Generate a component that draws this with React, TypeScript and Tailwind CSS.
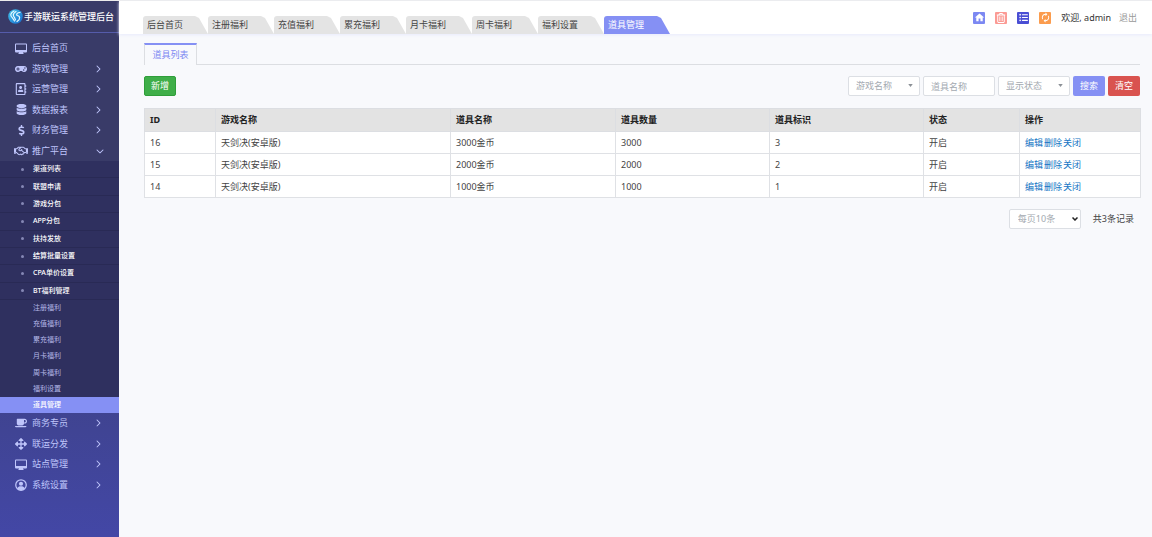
import type { ReactNode } from "react";
import {
  FaArrowsAlt,
  FaCoffee,
  FaDatabase,
  FaDollarSign,
  FaGamepad,
  FaRegAddressBook,
  FaRegHandshake,
} from "react-icons/fa";
import { FaChevronDown, FaChevronRight, FaListUl, FaRegTrashCan } from "react-icons/fa6";
import { MdAutorenew, MdHome } from "react-icons/md";

type MenuEntry = { label: string; icon: ReactNode; open?: boolean; leaf?: boolean };

const MonitorIcon = () => (
  <svg viewBox="0 0 24 22" className="h-[11px] w-3" fill="currentColor">
    <path
      fillRule="evenodd"
      d="M2 1h20a2 2 0 0 1 2 2v14a2 2 0 0 1-2 2h-6v1h1v2H7v-2h1v-1H2a2 2 0 0 1-2-2V3a2 2 0 0 1 2-2zm0 2v11h20V3z"
    />
  </svg>
);

const UserIcon = () => (
  <svg viewBox="0 0 24 24" className="size-3">
    <circle cx="12" cy="12" r="10.5" fill="none" stroke="currentColor" strokeWidth="2.5" />
    <circle cx="12" cy="9.5" r="4.2" fill="currentColor" />
    <path d="M4.500 19c1-3.500 4-4.500 7.500-4.500s6.500 1 7.500 4.500c-4 4.500-11 4.500-15 0z" fill="currentColor" />
  </svg>
);

const topMenu: MenuEntry[] = [
  { label: "后台首页", icon: <MonitorIcon />, leaf: true },
  { label: "游戏管理", icon: <FaGamepad size={12} /> },
  { label: "运营管理", icon: <FaRegAddressBook size={12} /> },
  { label: "数据报表", icon: <FaDatabase size={11} /> },
  { label: "财务管理", icon: <FaDollarSign size={11} /> },
  { label: "推广平台", icon: <FaRegHandshake size={14} />, open: true },
];

const bottomMenu: MenuEntry[] = [
  { label: "商务专员", icon: <FaCoffee size={12} /> },
  { label: "联运分发", icon: <FaArrowsAlt size={12} /> },
  { label: "站点管理", icon: <MonitorIcon /> },
  { label: "系统设置", icon: <UserIcon /> },
];

const subMenu = ["渠道列表", "联盟申请", "游戏分包", "APP分包", "扶持发放", "结算批量设置", "CPA单价设置", "BT福利管理"];
const welfareMenu = ["注册福利", "充值福利", "累充福利", "月卡福利", "周卡福利", "福利设置", "道具管理"];
const tabs = ["后台首页", ...welfareMenu];
const ACTIVE = "道具管理";

const columns = [
  { title: "ID", width: "w-[71px]" },
  { title: "游戏名称", width: "w-[235px]" },
  { title: "道具名称", width: "w-[165px]" },
  { title: "道具数量", width: "w-[154px]" },
  { title: "道具标识", width: "w-[154px]" },
  { title: "状态", width: "w-[96px]" },
  { title: "操作", width: "w-[121px]" },
];

const rows = [
  { id: 16, game: "天剑决(安卓版)", name: "3000金币", count: 3000, mark: 3, status: "开启" },
  { id: 15, game: "天剑决(安卓版)", name: "2000金币", count: 2000, mark: 2, status: "开启" },
  { id: 14, game: "天剑决(安卓版)", name: "1000金币", count: 1000, mark: 1, status: "开启" },
];

const Logo = () => (
  <svg viewBox="0 0 30 30" className="size-[15px] shrink-0">
    <defs>
      <linearGradient id="logo" x1="0" y1="0" x2="1" y2="1">
        <stop offset="0" stopColor="#45c8ee" />
        <stop offset="1" stopColor="#1468cc" />
      </linearGradient>
    </defs>
    <circle cx="15" cy="15" r="14.5" fill="url(#logo)" />
    <g fill="none" stroke="#e8faff" strokeWidth="2.4" strokeLinecap="round">
      <path d="M12 4C5 8 3 13 9 18l4 6" />
      <path d="M16 5c-6 4-7 8-3 12l2 5" />
      <path d="M24 7c-5 0-8 3-6 6 6 0 8 7 0 12" />
    </g>
  </svg>
);

const MenuRow = ({ item }: { item: MenuEntry }) => (
  <a href="#" className="flex items-center pl-[14px] pr-[15px] text-[9px] text-[#bfc5fb]">
    <span className="flex w-[14px] justify-center">{item.icon}</span>
    <span className="ml-1 flex-1">{item.label}</span>
    {!item.leaf && (item.open ? <FaChevronDown size={8} /> : <FaChevronRight size={8} className="mr-0.5" />)}
  </a>
);

const Sidebar = () => (
  <aside className="w-[119px] shrink-0 bg-linear-to-b from-[#393b68] from-30% to-[#4347a6]">
    <div className="flex h-8 items-center gap-px border-b border-[#555cab] pl-2">
      <Logo />
      <h1 className="whitespace-nowrap text-[9px] font-medium text-white">手游联运系统管理后台</h1>
    </div>
    <nav className="pt-[5px]">
      <div className="grid h-[123px] grid-rows-6">
        {topMenu.map((item) => (
          <MenuRow key={item.label} item={item} />
        ))}
      </div>
      <div className="bg-[#2f305f]">
        <ul className="grid h-[139px] grid-rows-8 text-[7px] font-medium text-white">
          {subMenu.map((label) => (
            <li key={label} className="flex items-center border-b border-[#292a55] pl-[21px]">
              <span className="mr-[9px] size-[3px] rounded-full bg-[#8588b5]" />
              <a href="#">{label}</a>
            </li>
          ))}
        </ul>
        <ul className="grid h-[113px] grid-rows-7 text-[7px] text-[#b4b8e8]">
          {welfareMenu.map((label) => (
            <li
              key={label}
              className={`flex items-center pl-[33px] ${label === ACTIVE ? "bg-[#8590f4] font-medium text-white" : ""}`}
            >
              <a href="#">{label}</a>
            </li>
          ))}
        </ul>
      </div>
      <div className="grid h-[82px] grid-rows-4">
        {bottomMenu.map((item) => (
          <MenuRow key={item.label} item={item} />
        ))}
      </div>
    </nav>
  </aside>
);

const IconButton = ({ label, color, children }: { label: string; color: string; children: ReactNode }) => (
  <button type="button" aria-label={label} className={`flex size-3 items-center justify-center rounded-[1px] text-white ${color}`}>
    {children}
  </button>
);

const Header = () => (
  <header className="flex h-[33px] items-end justify-between bg-white pl-6 pr-[15px] shadow-[0_1px_3px_#e8ebfc]">
    <nav className="flex">
      {tabs.map((tab) => (
        <a
          key={tab}
          href="#"
          className={`flex h-[18px] w-[66px] items-center rounded-tl-[3px] pl-1 [clip-path:polygon(0_0,calc(100%-13px)_0,calc(100%-9px)_2px,100%_100%,0_100%)] first:w-[65px] ${
            tab === ACTIVE ? "bg-[#8590f4] text-white" : "bg-[#e4e4e4] text-[#444]"
          }`}
        >
          {tab}
        </a>
      ))}
    </nav>
    <div className="flex h-full items-center gap-[10px]">
      <IconButton label="首页" color="bg-[#7c88f2]"><MdHome size={11} /></IconButton>
      <IconButton label="清除缓存" color="bg-[#fb9a94]"><FaRegTrashCan size={10} /></IconButton>
      <IconButton label="列表" color="bg-[#4a4ed4]"><FaListUl size={9} /></IconButton>
      <IconButton label="刷新" color="bg-[#fb9c4e]"><MdAutorenew size={11} /></IconButton>
      <div className="flex gap-2">
        <span className="text-[#333]">欢迎, admin</span>
        <a href="#" className="text-[#999]">退出</a>
      </div>
    </div>
  </header>
);

const FilterSelect = ({ label }: { label: string }) => (
  <div className="relative">
    <select
      aria-label={label}
      className="h-5 w-[72px] appearance-none rounded-xs border border-[#dcdfe4] bg-white pl-[7px] text-[#a3a9b0]"
    >
      <option>{label}</option>
    </select>
    <svg viewBox="0 0 6 4" className="pointer-events-none absolute right-[7px] top-2 h-[3px] w-[5px] fill-[#8b9096]">
      <path d="M0 0h6L3 4z" />
    </svg>
  </div>
);

const ItemTable = () => (
  <table className="mt-3 w-full table-fixed border-collapse bg-white text-left text-[#444]">
    <thead>
      <tr className="h-[23px] bg-[#e3e3e3] text-[#222]">
        {columns.map((col) => (
          <th key={col.title} className={`border border-[#dcdee2] px-[5px] font-bold ${col.width}`}>
            {col.title}
          </th>
        ))}
      </tr>
    </thead>
    <tbody>
      {rows.map((row) => (
        <tr key={row.id} className="h-[22px] *:border *:border-[#dfe1e5] *:px-[5px]">
          <td>{row.id}</td>
          <td>{row.game}</td>
          <td>{row.name}</td>
          <td>{row.count}</td>
          <td>{row.mark}</td>
          <td>{row.status}</td>
          <td>
            <div className="flex gap-px text-[#1274c4]">
              <a href="#">编辑</a>
              <a href="#">删除</a>
              <a href="#">关闭</a>
            </div>
          </td>
        </tr>
      ))}
    </tbody>
  </table>
);

export default function App() {
  return (
    <div className="flex min-h-screen border-t border-[#ececec] bg-[#f8f9fc] font-['Noto_Sans','Noto_Sans_CJK_SC',sans-serif] text-[9px] leading-3">
      <Sidebar />
      <div className="min-w-0 flex-1">
        <Header />
        <main className="pl-[25px] pr-3 pt-[9px]">
          <div className="flex items-end">
            <a
              href="#"
              className="flex h-[22px] w-[53px] items-center justify-center border-x border-t-2 border-x-[#dcdee2] border-t-[#8590f4] text-[#7c88f2]"
            >
              道具列表
            </a>
            <div className="flex-1 border-b border-[#dcdee2]" />
          </div>

          <div className="mt-[11px] flex justify-between">
            <button type="button" className="h-5 w-8 rounded-xs border border-[#2f9e3a] bg-[#3fae49] text-white">
              新增
            </button>
            <form className="flex gap-[3px]">
              <FilterSelect label="游戏名称" />
              <input
                aria-label="道具名称"
                placeholder="道具名称"
                className="h-5 w-[72px] rounded-xs border border-[#dcdfe4] bg-white px-[7px] placeholder:text-[#a3a9b0]"
              />
              <FilterSelect label="显示状态" />
              <button type="button" className="h-5 w-8 rounded-xs bg-[#8590f4] text-white">搜索</button>
              <button type="reset" className="h-5 w-8 rounded-xs bg-[#d9534f] text-white">清空</button>
            </form>
          </div>

          <ItemTable />

          <div className="mt-[11px] flex items-center justify-end gap-3 pr-1.5">
            <div className="relative">
              <select
                aria-label="每页条数"
                className="h-5 w-[72px] appearance-none rounded-xs border border-[#dcdfe4] bg-white pl-2 text-[#a3a9b0]"
              >
                <option>每页10条</option>
              </select>
              <svg
                viewBox="0 0 6 4"
                className="pointer-events-none absolute right-[3px] top-2 h-1 w-1.5 fill-none stroke-[#222] stroke-[1.5px]"
              >
                <path d="M.5.5 3 3 5.500.5" />
              </svg>
            </div>
            <span className="text-[#444]">共3条记录</span>
          </div>
        </main>
      </div>
    </div>
  );
}
